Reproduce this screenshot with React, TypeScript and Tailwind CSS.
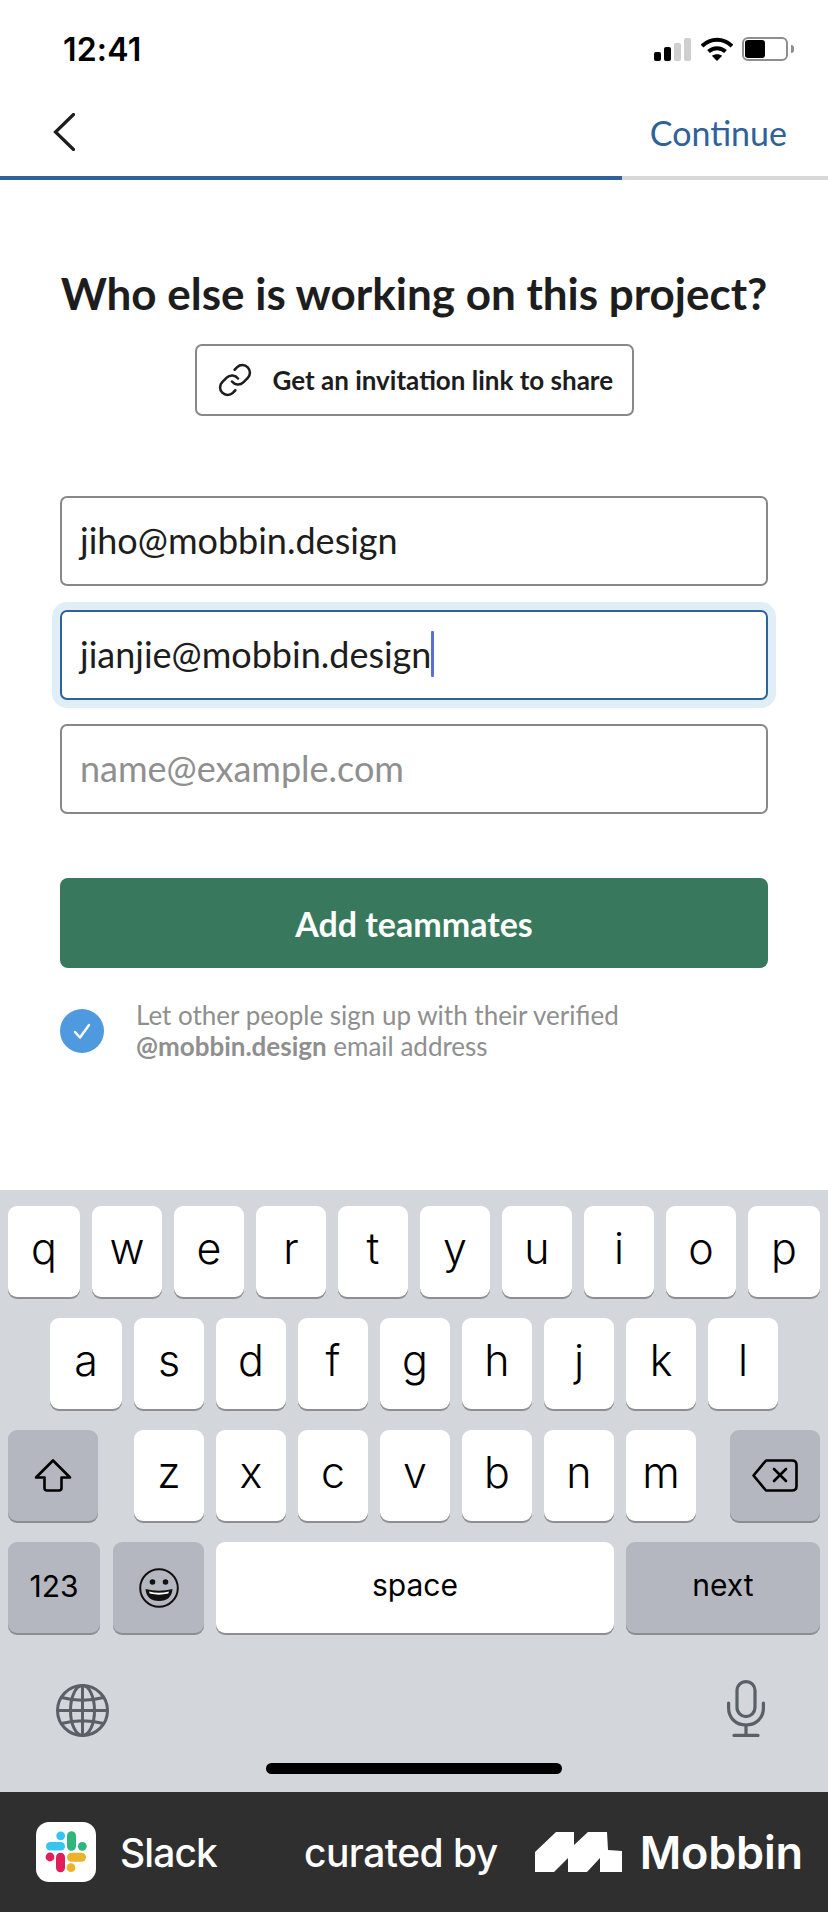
import { Link } from "lucide-react";

const rowOne = ["q", "w", "e", "r", "t", "y", "u", "i", "o", "p"];
const rowTwo = ["a", "s", "d", "f", "g", "h", "j", "k", "l"];
const rowThree = ["z", "x", "c", "v", "b", "n", "m"];

function Key({ label, className = "w-[70px]" }: { label: string; className?: string }) {
  return (
    <div className={`flex h-[91px] items-center justify-center rounded-[9px] bg-white pb-[7px] text-[43px] font-light text-black shadow-[0_2px_0_#8d8e92] ${className}`}>
      {label}
    </div>
  );
}

function DarkKey({ children, className }: { children: React.ReactNode; className: string }) {
  return (
    <div className={`flex h-[91px] items-center justify-center rounded-[9px] bg-[#b4b7bf] text-black shadow-[0_2px_0_#8d8e92] ${className}`}>
      {children}
    </div>
  );
}

function StatusBar() {
  return (
    <div className="flex h-[84px] items-start justify-between pl-[63px] pr-[34px] pt-[31px]">
      <span className="font-['Inter'] text-[32px] leading-[38px] font-semibold tracking-[0.2px] text-black">12:41</span>
      <div className="flex items-start pt-[6px]">
        <div className="flex h-[24px] items-end gap-[3px]">
          <div className="h-[9px] w-[7px] rounded-[2px] bg-black" />
          <div className="h-[14px] w-[7px] rounded-[2px] bg-black" />
          <div className="h-[18px] w-[7px] rounded-[2px] bg-[#cfcfcf]" />
          <div className="h-[23px] w-[7px] rounded-[2px] bg-[#cfcfcf]" />
        </div>
        <svg width="32" height="24" viewBox="0 0 32 24" className="ml-[10px]">
          <path d="M1 9 C9.5 0.5 22.5 0.5 31 9" fill="none" stroke="#000" strokeWidth="4" />
          <path d="M7.5 14.5 C12.5 10 19.5 10 24.5 14.5" fill="none" stroke="#000" strokeWidth="4" />
          <path d="M16 24 L10.8 18.8 C13.5 16.6 18.5 16.6 21.2 18.8 Z" fill="#000" />
        </svg>
        <div className="ml-[9px] flex h-[24px] w-[46px] items-center rounded-[6px] border-2 border-[#8e8e8e] pl-[1px]">
          <div className="h-[18px] w-[20px] rounded-[3px] bg-black" />
        </div>
        <div className="ml-[3px] mt-[8px] h-[8px] w-[3px] rounded-r-[3px] bg-[#8e8e8e]" />
      </div>
    </div>
  );
}

function NavBar() {
  return (
    <div className="flex h-[92px] items-center justify-between pl-[53px] pr-[41px]">
      <svg width="22" height="38" viewBox="0 0 22 38" className="mt-[3px]">
        <path d="M20.5 1.5 L2.5 19 L20.5 36.5" fill="none" stroke="#1d1d1d" strokeWidth="3.2" strokeLinecap="round" />
      </svg>
      <span className="pt-[6px] text-[34px] leading-[40px] text-[#2f6299]">Continue</span>
    </div>
  );
}

function EmailField({ value, focused, placeholder }: { value: string; focused?: boolean; placeholder?: boolean }) {
  return (
    <div
      className={`flex h-[90px] items-center rounded-[7px] border-2 px-[18px] pb-[2px] text-[36px] ${
        focused ? "border-[#2f6299] shadow-[0_0_0_8px_#e0eef7]" : "border-[#888888]"
      } ${placeholder ? "text-[#8f8f8f]" : "text-[#1d1d1d]"}`}
    >
      <span>{value}</span>
      {focused && <span className="h-[46px] w-[3px] rounded-[1px] bg-[#5a6fd8]" />}
    </div>
  );
}

function SlackLogo() {
  return (
    <svg width="60" height="60" viewBox="0 0 60 60">
      <rect width="60" height="60" rx="13" fill="#fff" />
      <circle cx="24.7" cy="13.8" r="4.4" fill="#36c5f0" />
      <rect x="10" y="20" width="19" height="8.6" rx="4.3" fill="#36c5f0" />
      <rect x="31" y="9.3" width="9" height="19.5" rx="4.5" fill="#2eb67d" />
      <circle cx="46.3" cy="24.3" r="4.4" fill="#2eb67d" />
      <circle cx="14" cy="35" r="4.4" fill="#e01e5a" />
      <rect x="20" y="30.7" width="9" height="19.5" rx="4.5" fill="#e01e5a" />
      <rect x="31" y="30.7" width="19" height="9" rx="4.5" fill="#ecb22e" />
      <circle cx="35" cy="45.7" r="4.4" fill="#ecb22e" />
    </svg>
  );
}

function Keyboard() {
  return (
    <div className="flex h-[602px] flex-col bg-[#d3d6db] px-[8px] pt-[16px] font-['Inter']">
      <div className="flex gap-[12px]">
        {rowOne.map((k) => (
          <Key key={k} label={k} className={k === "q" || k === "p" ? "w-[72px]" : "w-[70px]"} />
        ))}
      </div>
      <div className="mt-[21px] flex gap-[12px] pl-[42px]">
        {rowTwo.map((k) => (
          <Key key={k} label={k} className={k === "a" ? "w-[72px]" : "w-[70px]"} />
        ))}
      </div>
      <div className="mt-[21px] flex">
        <DarkKey className="w-[90px]">
          <svg width="38" height="33" viewBox="0 0 38 33">
            <path
              d="M19 1.5 L36 18.5 H27.5 V29 Q27.5 31.5 25 31.5 H13 Q10.5 31.5 10.5 29 V18.5 H2 Z"
              fill="none"
              stroke="#000"
              strokeWidth="2.6"
              strokeLinejoin="round"
            />
          </svg>
        </DarkKey>
        <div className="ml-[36px] flex gap-[12px]">
          {rowThree.map((k) => (
            <Key key={k} label={k} />
          ))}
        </div>
        <DarkKey className="ml-[34px] w-[90px]">
          <svg width="46" height="33" viewBox="0 0 46 33">
            <path
              d="M14 1.5 H40 Q44.5 1.5 44.5 6 V27 Q44.5 31.5 40 31.5 H14 L1.5 16.5 Z"
              fill="none"
              stroke="#000"
              strokeWidth="2.6"
              strokeLinejoin="round"
            />
            <path d="M22 10 L34 22 M34 10 L22 22" stroke="#000" strokeWidth="2.6" strokeLinecap="round" />
          </svg>
        </DarkKey>
      </div>
      <div className="mt-[21px] flex">
        <DarkKey className="w-[92px] pb-[2px] text-[30px]">123</DarkKey>
        <DarkKey className="ml-[13px] w-[91px]">
          <svg width="40" height="40" viewBox="0 0 40 40">
            <circle cx="20" cy="20" r="18.8" fill="none" stroke="#111" strokeWidth="2" />
            <circle cx="13.5" cy="14" r="2.8" fill="#111" />
            <circle cx="26.5" cy="14" r="2.8" fill="#111" />
            <path d="M6.5 21 Q20 24.5 33.5 21 Q32.5 33 20 33 Q7.5 33 6.5 21 Z" fill="#111" />
            <path d="M10 23.6 Q20 26 30 23.6 L29.3 25.6 Q20 27.8 10.7 25.6 Z" fill="#fff" />
          </svg>
        </DarkKey>
        <Key label="space" className="ml-[12px] w-[398px] !pb-[4px] !text-[30px] !font-normal" />
        <DarkKey className="ml-[12px] w-[194px] pb-[4px] text-[30px]">next</DarkKey>
      </div>
      <div className="mt-[47px] flex items-start justify-between pl-[48px] pr-[55px]">
        <svg width="53" height="53" viewBox="0 0 53 53" className="mt-[4px]" fill="none" stroke="#5b5f66" strokeWidth="3">
          <circle cx="26.5" cy="26.5" r="25" />
          <ellipse cx="26.5" cy="26.5" rx="12" ry="25" />
          <path d="M26.5 1.5 V51.5 M1.5 26.5 H51.5 M5.5 13.5 Q26.5 19 47.5 13.5 M5.5 39.5 Q26.5 34 47.5 39.5" />
        </svg>
        <svg width="38" height="57" viewBox="0 0 38 57" fill="none" stroke="#5b5f66" strokeWidth="3.2">
          <rect x="10" y="1.6" width="18" height="35" rx="9" />
          <path d="M1.6 23 V28 C1.6 38 9 45 19 45 C29 45 36.4 38 36.4 28 V23" strokeLinecap="round" />
          <path d="M19 45 V55 M7 55.4 H31" strokeLinecap="round" />
        </svg>
      </div>
      <div className="mt-[26px] flex justify-center">
        <div className="h-[11px] w-[296px] rounded-full bg-black" />
      </div>
    </div>
  );
}

function Footer() {
  return (
    <div className="flex h-[120px] items-center bg-[#2f2f2f] pl-[36px] font-['Inter'] text-white">
      <SlackLogo />
      <span className="ml-[24px] pt-[2px] text-[39px] font-medium tracking-[-0.9px]">Slack</span>
      <span className="ml-[87px] pt-[2px] text-[39px] font-medium tracking-[-0.55px]">curated by</span>
      <svg width="87" height="40" viewBox="0 0 87 40" className="ml-[37px]">
        <path d="M0 20 L21 0 H39 V13 L53 0 H72 L73 18 L87 19 V40 H65 V26 L52 40 H33 V26 L19 40 H0 Z" fill="#fff" />
      </svg>
      <span className="ml-[18px] pt-[2px] text-[45px] font-semibold tracking-[-0.2px]">Mobbin</span>
    </div>
  );
}

export default function App() {
  return (
    <div className="flex h-[1912px] w-[828px] flex-col overflow-hidden bg-white font-['Lato',sans-serif]">
      <StatusBar />
      <NavBar />
      <div className="flex h-[4px] bg-[#d8d8d8]">
        <div className="w-[622px] bg-[#2f6299]" />
      </div>
      <div className="flex flex-1 flex-col px-[60px]">
        <h1 className="mt-[88px] text-center text-[44px] leading-[50px] font-bold whitespace-nowrap text-[#1d1d1d]">
          Who else is working on this project?
        </h1>
        <div className="mt-[26px] flex justify-center">
          <div className="flex h-[72px] w-[439px] items-center rounded-[7px] border-2 border-[#888888] pl-[20px]">
            <Link size={36} strokeWidth={1.7} className="text-[#1d1d1d]" />
            <span className="ml-[20px] text-[26px] font-bold text-[#1d1d1d]">Get an invitation link to share</span>
          </div>
        </div>
        <div className="mt-[80px] flex flex-col gap-[24px]">
          <EmailField value="jiho@mobbin.design" />
          <EmailField value="jianjie@mobbin.design" focused />
          <EmailField value="name@example.com" placeholder />
        </div>
        <div className="mt-[64px] flex h-[90px] items-center justify-center rounded-[8px] bg-[#38795e] text-[34px] font-bold text-white">
          Add teammates
        </div>
        <div className="mt-[32px] flex items-center">
          <div className="flex h-[44px] w-[44px] items-center justify-center rounded-full bg-[#4f9ade]">
            <svg width="24" height="24" viewBox="0 0 24 24">
              <path d="M5 13 L10 18.5 L19 6" fill="none" stroke="#fff" strokeWidth="2.4" strokeLinecap="round" strokeLinejoin="round" />
            </svg>
          </div>
          <p className="ml-[32px] text-[26px] leading-[31px] text-[#8f8f8f]">
            Let other people sign up with their verified
            <br />
            <b className="font-bold">@mobbin.design</b> email address
          </p>
        </div>
      </div>
      <Keyboard />
      <Footer />
    </div>
  );
}
